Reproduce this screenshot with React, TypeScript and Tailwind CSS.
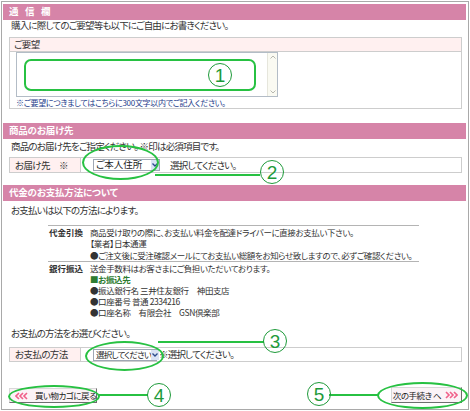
import type { ReactNode } from 'react'

const GREEN = '#27c142'
const DARK_GREEN = '#1e9a3a'

function SectionBar({ children }: { children: ReactNode }) {
  return (
    <div className="h-[16px] bg-[#d684a8] flex items-center pl-[6px] text-white font-bold text-[9.5px] tracking-[-0.2px] leading-none">
      {children}
    </div>
  )
}

function Chevrons({ dir }: { dir: 'left' | 'right' }) {
  const pts = dir === 'left' ? ['4,1 1,4 4,7', '8,1 5,4 8,7', '12,1 9,4 12,7'] : ['1,1 4,4 1,7', '5,1 8,4 5,7', '9,1 12,4 9,7']
  return (
    <svg width="13" height="8" viewBox="0 0 13 8" className="shrink-0">
      {pts.map(p => (
        <polyline key={p} points={p} fill="none" stroke="#f0608a" strokeWidth="1.6" />
      ))}
    </svg>
  )
}

function SelectBox({ label, width, small }: { label: string; width: string; small?: boolean }) {
  return (
    <div className={`${width} h-[12px] bg-white border border-[#9fa7b3] flex items-center justify-between shrink-0`}>
      <span
        className={`pl-[2px] leading-none text-[#222] whitespace-nowrap ${small ? 'text-[8.5px] tracking-[-0.8px]' : 'text-[9.5px]'}`}
      >
        {label}
      </span>
      <span className="w-[8px] h-[10px] bg-[#d9e3f5] flex items-center justify-center shrink-0">
        <svg width="6" height="4" viewBox="0 0 6 4">
          <polyline points="0.5,0.5 3,3 5.5,0.5" fill="none" stroke="#2b4a8c" strokeWidth="1.3" />
        </svg>
      </span>
    </div>
  )
}

function FakeTextarea() {
  return (
    <div className="w-[262px] h-[45px] border border-[#b3bcc6] bg-white flex justify-end">
      <div className="w-[10px] h-full bg-[#fafaf2] border-l border-[#e6e6dc] flex flex-col justify-between items-center py-[2px]">
        <svg width="6" height="4" viewBox="0 0 6 4">
          <polyline points="0.5,3.5 3,1 5.5,3.5" fill="none" stroke="#b8b8b0" strokeWidth="1" />
        </svg>
        <svg width="6" height="4" viewBox="0 0 6 4">
          <polyline points="0.5,0.5 3,3 5.5,0.5" fill="none" stroke="#b8b8b0" strokeWidth="1" />
        </svg>
      </div>
    </div>
  )
}

function Circled({ n, x, y }: { n: number; x: number; y: number }) {
  return (
    <div
      className="absolute w-[24px] h-[24px] rounded-full border-[1.5px] flex items-center justify-center text-[19px] leading-none tracking-normal font-['Liberation_Sans',sans-serif]"
      style={{ left: x, top: y, borderColor: DARK_GREEN, color: DARK_GREEN }}
    >
      {n}
    </div>
  )
}

function Ring({ x, y, w, h, r }: { x: number; y: number; w: number; h: number; r?: string }) {
  return (
    <div
      className="absolute border-[2.5px]"
      style={{ left: x, top: y, width: w, height: h, borderColor: GREEN, borderRadius: r ?? '50%' }}
    />
  )
}

function Line({ x, y, w }: { x: number; y: number; w: number }) {
  return <div className="absolute h-[2px]" style={{ left: x, top: y, width: w, background: GREEN }} />
}

const desc = 'pl-[8px] text-[9.5px] tracking-[-0.8px] leading-[11px] whitespace-nowrap'
const label = 'w-[71px] bg-[#fff0f0] border-r border-[#cdcdcd] pl-[5px] text-[9.5px] tracking-[-0.6px] whitespace-nowrap'
const btn =
  'h-[15px] bg-[#fbf3f7] border border-t-[#d8d8d8] border-l-[#d8d8d8] border-r-[#6e6e6e] border-b-[#6e6e6e] flex items-center gap-[4px] text-[8.5px] tracking-[-0.5px] leading-none text-[#222] whitespace-nowrap'

export default function App() {
  return (
    <div className="relative w-[470px] h-[411px] overflow-hidden bg-white pl-px pt-px text-[#333] font-['Noto_Sans_CJK_JP',sans-serif] [font-feature-settings:'palt']">
      <div className="w-[468px] h-[409px] border border-[#a9a9a9] pt-[2px] pl-px pr-[2px]">
        {/* 通信欄 */}
        <SectionBar>
          <span className="tracking-[6.5px]">通信欄</span>
        </SectionBar>
        <p className={`h-[17px] ${desc}`}>購入に際してのご要望等も以下にご自由にお書きください。</p>
        <div className="ml-[6px] w-[453px] border border-[#cdcdcd]">
          <div className="h-[14px] bg-[#fff0f0] border-b border-[#cdcdcd] pl-[4px] text-[9.5px] tracking-[-0.6px] leading-[13px]">ご要望</div>
          <div className="pl-[6px] pb-px">
            <FakeTextarea />
            <p className="mt-px text-[8px] tracking-[-0.3px] leading-[9px] text-[#1d3c8a] whitespace-nowrap">
              ※ご要望につきましてはこちらに300文字以内でご記入ください。
            </p>
          </div>
        </div>

        {/* お届け先 */}
        <div className="mt-[14px]">
          <SectionBar>商品のお届け先</SectionBar>
        </div>
        <p className={`h-[18px] pt-[2px] ${desc}`}>商品のお届け先をご指定ください。 ※印は必須項目です。</p>
        <div className="ml-[6px] w-[453px] h-[16px] border border-[#cdcdcd] flex">
          <div className={`${label} leading-[14px]`}>お届け先　※</div>
          <div className="pl-[12px] flex items-center">
            <SelectBox label="ご本人住所" width="w-[67px]" />
            <span className="ml-[10px] text-[9.5px] tracking-[-0.8px] whitespace-nowrap">選択してください。</span>
          </div>
        </div>

        {/* お支払方法 */}
        <div className="mt-[12px]">
          <SectionBar>代金のお支払方法について</SectionBar>
        </div>
        <p className={`h-[24px] pt-[4px] ${desc}`}>お支払いは以下の方法によります。</p>
        <div className="ml-[45px] w-[371px] border-t border-[#b4b4b4] text-[8.5px] tracking-[-0.4px] leading-[11px] whitespace-nowrap">
          <div className="flex border-b border-[#b4b4b4] pt-px">
            <div className="w-[42px] pl-px font-bold shrink-0 tracking-normal">代金引換</div>
            <div>
              <p>商品受け取りの際に、お支払い料金を配達ドライバーに直接お支払い下さい。</p>
              <p>【業者】日本通運</p>
              <p className="mt-px">●ご注文後に受注確認メールにてお支払い総額をお知らせ致しますので、必ずご確認ください。</p>
            </div>
          </div>
          <div className="flex pt-px">
            <div className="w-[42px] pl-px font-bold shrink-0 tracking-normal">銀行振込</div>
            <div>
              <p>送金手数料はお客さまにご負担いただいております。</p>
              <p className="font-bold text-[#2e7d32]">■お振込先</p>
              <p>●振込銀行名 三井住友銀行　神田支店</p>
              <p>●口座番号 普通 2334216</p>
              <p>●口座名称　有限会社　GSN倶楽部</p>
            </div>
          </div>
        </div>
        <p className={`mt-[10px] ${desc}`}>お支払の方法をお選びください。</p>
        <div className="mt-[8px] ml-[6px] w-[453px] h-[15px] border border-[#cdcdcd] flex">
          <div className={`${label} leading-[13px]`}>お支払の方法</div>
          <div className="pl-[12px] flex items-center">
            <SelectBox label="選択してください" width="w-[64px]" small />
            <span className="ml-[2px] text-[9.5px] tracking-[-0.8px] whitespace-nowrap">※選択してください。</span>
          </div>
        </div>

        {/* 戻る / 次へ */}
        <div className="mt-[25px] flex justify-between items-start">
          <button className={`ml-[6px] mt-px w-[88px] pl-[5px] ${btn}`}>
            <Chevrons dir="left" />
            <span className="ml-[3px]">買い物カゴに戻る</span>
          </button>
          <button className={`mr-[4px] w-[71px] h-[16px] justify-end pr-[3px] ${btn}`}>
            <span>次の手続き へ</span>
            <Chevrons dir="right" />
          </button>
        </div>
      </div>

      {/* 番号付きの囲み */}
      <Ring x={24} y={59} w={232} h={32} r="7px" />
      <Circled n={1} x={208} y={63} />

      <Ring x={82} y={145} w={77} h={35} />
      <Line x={155} y={174} w={105} />
      <Circled n={2} x={260} y={160} />

      <Ring x={85} y={341} w={79} h={30} />
      <Line x={158} y={341} w={106} />
      <Circled n={3} x={263} y={329} />

      <Ring x={8} y={385} w={92} h={23} />
      <Line x={99} y={394} w={49} />
      <Circled n={4} x={147} y={383} />

      <Ring x={377} y={382} w={91} h={27} />
      <Line x={329} y={394} w={49} />
      <Circled n={5} x={307} y={382} />
    </div>
  )
}
